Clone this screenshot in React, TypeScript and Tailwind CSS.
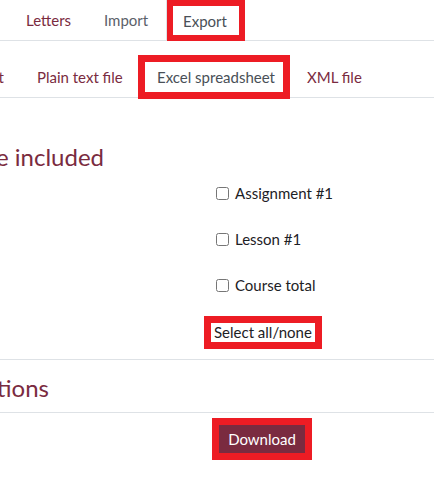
import React from "react";

const font = "font-['Lato','Liberation_Sans',sans-serif]";

const CheckRow = ({ label }: { label: string }) => (
  <div className="flex h-[46px] items-center pl-[216px]">
    <input type="checkbox" className="m-0 h-[13px] w-[13px]" />
    <span className="ml-[6px] text-[15px] text-[#1d2125]">{label}</span>
  </div>
);

export default function App() {
  return (
    <div className={`${font} h-[478px] w-[434px] overflow-hidden bg-white`}>
      {/* top tabs */}
      <div className="flex h-[41px] items-stretch border-b border-[#dee2e6] text-[15px]">
        <a className="ml-[26px] flex w-[78px] items-center pt-px text-[#7a2b40]">Letters</a>
        <a className="flex w-[62px] items-center pt-px text-[#5b6169]">Import</a>
        <div className="border-l border-[#dee2e6]">
          <div className="-mb-px flex h-[41px] w-[78px] items-center border-[6px] border-[#ed1c24] pl-[10px] pt-px text-[#495057]">
            Export
          </div>
        </div>
      </div>

      {/* format tabs */}
      <div className="flex h-[57px] items-end border-b border-[#dee2e6] text-[15px]">
        <div className="-mb-[2px] flex h-[44px] w-[4px] items-center justify-end overflow-hidden whitespace-nowrap text-[#7a2b40]">
          <span>OpenDocument spreadsheet</span>
        </div>
        <a className="-mb-[2px] ml-[33px] flex h-[44px] w-[101px] items-center whitespace-nowrap text-[#7a2b40]">
          Plain text file
        </a>
        <div className="-mb-[2px] flex h-[44px] w-[152px] items-center whitespace-nowrap border-[7px] border-[#ed1c24] pl-[12px] text-[#495057]">
          Excel spreadsheet
        </div>
        <a className="-mb-[2px] ml-[17px] flex h-[44px] items-center whitespace-nowrap text-[#7a2b40]">
          XML file
        </a>
      </div>

      {/* grade items */}
      <div className="mt-[45px] flex w-[104px] justify-end overflow-hidden whitespace-nowrap text-[24px] leading-[28px] text-[#7a2b40]">
        <span>Grade items to be included</span>
      </div>
      <div className="-mt-px">
        <CheckRow label="Assignment #1" />
        <CheckRow label="Lesson #1" />
        <CheckRow label="Course total" />
      </div>
      <div className="ml-[204px] mt-[8px] flex h-[33px] w-[118px] items-center whitespace-nowrap border-[7px] border-[#ed1c24] pl-[3px] text-[15px] text-[#1d2125]">
        Select all/none
      </div>

      {/* export format options */}
      <div className="mt-[10px] border-t border-[#dee2e6]" />
      <div className="mt-[14px] flex w-[49px] justify-end overflow-hidden whitespace-nowrap text-[24px] leading-[28px] text-[#7a2b40]">
        <span>Export format options</span>
      </div>
      <div className="mt-[10px] border-t border-[#dee2e6]" />
      <div className="ml-[212px] mt-[5px] w-[100px] border-[7px] border-[#ed1c24]">
        <button className="flex h-[28px] w-full items-center justify-center bg-[#7a2b40] text-[15px] text-white">
          Download
        </button>
      </div>
    </div>
  );
}
